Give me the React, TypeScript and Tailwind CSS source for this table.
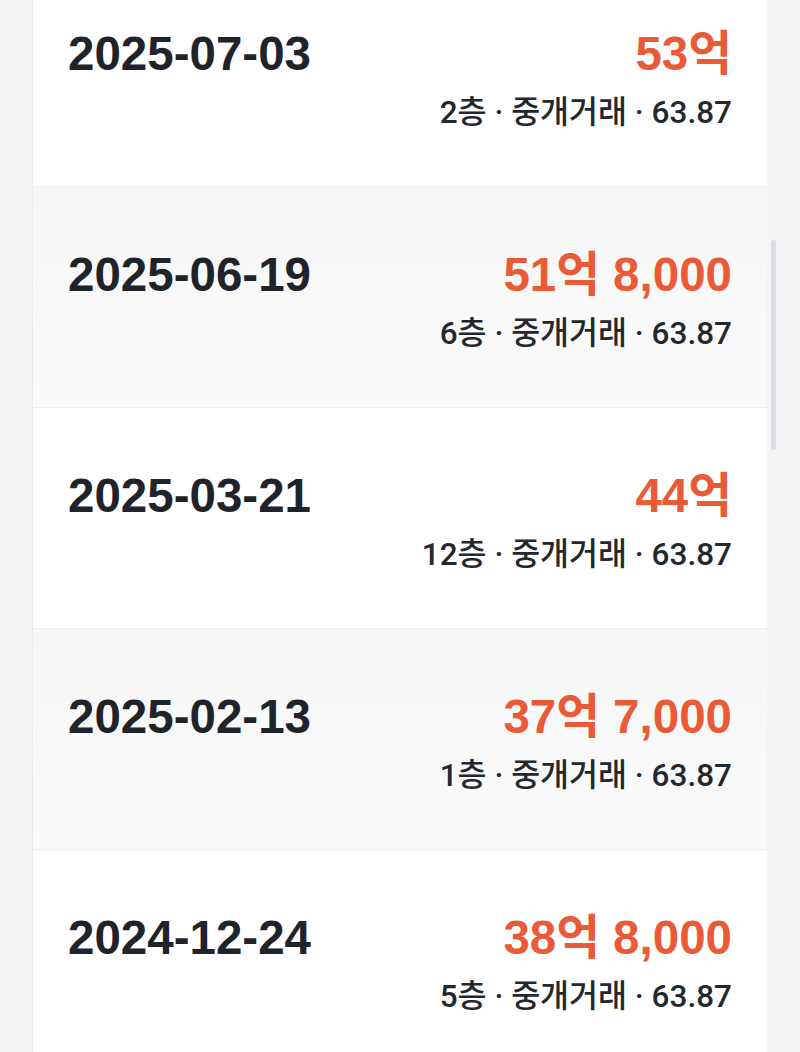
import React from "react";

type Row = { date: string; price: string; floor: string };

const rows: Row[] = [
  { date: "2025-07-03", price: "53억", floor: "2층" },
  { date: "2025-06-19", price: "51억 8,000", floor: "6층" },
  { date: "2025-03-21", price: "44억", floor: "12층" },
  { date: "2025-02-13", price: "37억 7,000", floor: "1층" },
  { date: "2024-12-24", price: "38억 8,000", floor: "5층" },
];

const font = { fontFamily: '"Liberation Sans", "Noto Sans CJK KR", Arial, sans-serif' };
const subFont = { fontFamily: 'Roboto, "Noto Sans CJK KR", Arial, sans-serif' };

export default function App() {
  return (
    <div
      className="relative h-[1052px] w-[800px] overflow-hidden bg-[#f3f4f6]"
      style={font}
    >
      <div className="ml-[33px] w-[734px] -mt-[34px] bg-white shadow-[-1px_0_0_#ebecef]">
        {rows.map((r, i) => (
          <div
            key={r.date}
            className={
              "box-border flex h-[221px] items-start justify-between border-b border-[#eeeff1] px-[35px] pt-[60px] " +
              (i % 2 === 1 ? "bg-gradient-to-b from-[#f7f7f8] to-[#fafafb]" : "bg-white")
            }
          >
            <div className="text-[47.5px] font-bold leading-[56px] text-[#1f242b]">
              {r.date}
            </div>
            <div className="flex flex-col items-end">
              <div className="text-[47.5px] font-bold leading-[56px] text-[#eb5a37]">
                {r.price}
              </div>
              <div
                className="mt-[11px] text-[31.5px] font-medium leading-[40px] text-[#23272e]"
                style={subFont}
              >
                {r.floor} · 중개거래 · 63.87
              </div>
            </div>
          </div>
        ))}
      </div>
      <div className="absolute left-[771px] top-[240px] h-[210px] w-[5px] rounded-full bg-[#dcdde1]" />
    </div>
  );
}
